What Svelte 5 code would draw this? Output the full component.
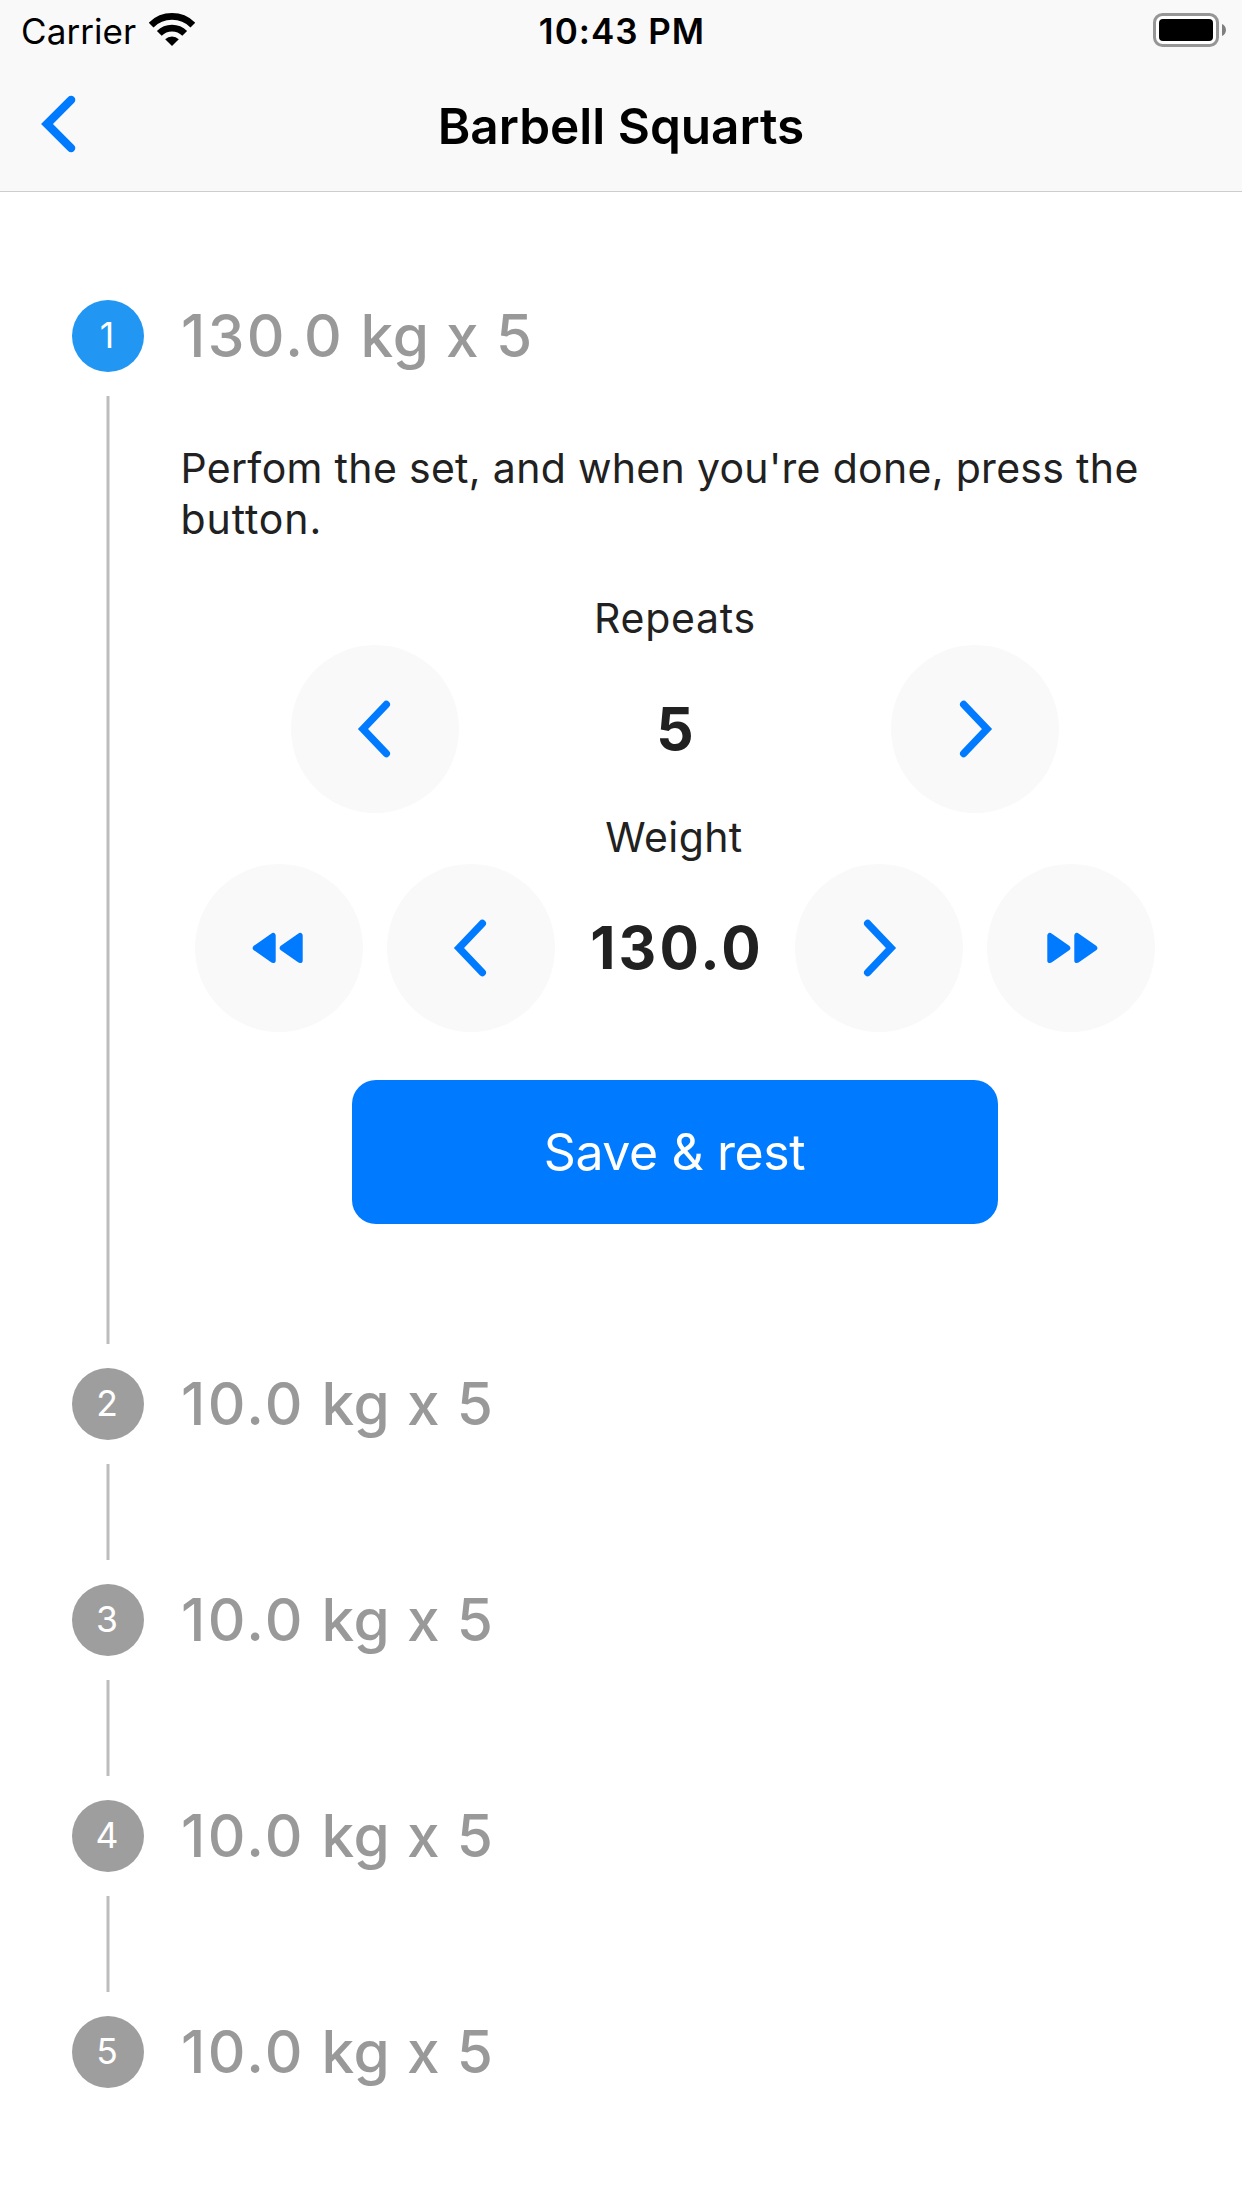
<script>
  let repeats = $state(5);
  let weight = $state(130);

  const sets = [
    { weight: 130, repeats: 5 },
    { weight: 10, repeats: 5 },
    { weight: 10, repeats: 5 },
    { weight: 10, repeats: 5 },
    { weight: 10, repeats: 5 }
  ];
  const active = 0;
</script>

{#snippet chevron()}
  <svg class="glyph" viewBox="-84 -84 168 168" aria-hidden="true">
    <path class="chevron" d="M11.3 -24.5 L-12 0 L11.3 24.5" />
  </svg>
{/snippet}

{#snippet double()}
  <svg class="glyph" viewBox="-84 -84 168 168" aria-hidden="true">
    <path class="solid" d="M-23.6 0 L-6 -12.4 V12.4 Z M3.4 0 L21 -12.4 V12.4 Z" />
  </svg>
{/snippet}

<div class="screen">
  <header>
    <div class="status">
      <div class="carrier">
        <span>Carrier</span>
        <svg class="wifi" width="46" height="62" viewBox="0 0 46 62" aria-hidden="true">
          <path class="wave" d="M2.1 25.1 A29.6 29.6 0 0 1 43.9 25.1" />
          <path class="wave" d="M10.3 33.3 A18 18 0 0 1 35.7 33.3" />
          <path d="M23 46 L16.2 39.2 A9.8 9.8 0 0 1 29.8 39.2 Z" />
        </svg>
      </div>
      <div class="time">10:43 PM</div>
      <svg class="battery" width="74" height="62" viewBox="0 0 74 62" aria-hidden="true">
        <rect class="shell" x="1.5" y="14.5" width="63" height="31" rx="8" />
        <rect x="6" y="19" width="54" height="22" rx="4" />
        <path class="nub" d="M69 24 C74.3 26 74.3 34 69 36 Z" />
      </svg>
    </div>
    <nav>
      <button class="back" aria-label="Back">
        <svg width="40" height="64" viewBox="0 0 40 64" aria-hidden="true">
          <path class="chevron bold" d="M32.1 7.9 L8 32 L32.1 56.1" />
        </svg>
      </button>
      <h1>Barbell Squarts</h1>
    </nav>
  </header>

  <main>
    {#each sets as set, i}
      <section class="step">
        <div class="rail">
          <div class="badge" class:active={i === active}>{i + 1}</div>
          {#if i < sets.length - 1}<div class="line"></div>{/if}
        </div>
        <div class="content">
          <h2><span class="amount">{set.weight.toFixed(1)}</span> kg x {set.repeats}</h2>
          {#if i === active}
            <div class="body">
              <p>Perfom the set, and when you're done, press the <span class="last">button.</span></p>
              <div class="label repeats">Repeats</div>
              <div class="controls">
                <button class="round" aria-label="Fewer repeats" onclick={() => (repeats -= 1)}>{@render chevron()}</button>
                <div class="value wide">{repeats}</div>
                <button class="round forward" aria-label="More repeats" onclick={() => (repeats += 1)}>{@render chevron()}</button>
              </div>
              <div class="label weight">Weight</div>
              <div class="controls">
                <button class="round" aria-label="Much less weight" onclick={() => (weight -= 10)}>{@render double()}</button>
                <button class="round" aria-label="Less weight" onclick={() => (weight -= 2.5)}>{@render chevron()}</button>
                <div class="value decimal">{weight.toFixed(1)}</div>
                <button class="round forward" aria-label="More weight" onclick={() => (weight += 2.5)}>{@render chevron()}</button>
                <button class="round forward" aria-label="Much more weight" onclick={() => (weight += 10)}>{@render double()}</button>
              </div>
              <button class="save">Save &amp; rest</button>
            </div>
          {/if}
        </div>
      </section>
    {/each}
  </main>
</div>

<style>
  :global(body) {
    margin: 0;
    background: #fff;
  }
  .screen {
    box-sizing: border-box;
    width: 1242px;
    height: 2208px;
    overflow: hidden;
    background: #fff;
    color: #212121;
    font-family: Inter, "Liberation Sans", sans-serif;
  }
  button {
    padding: 0;
    border: 0;
    background: none;
    font: inherit;
  }
  svg {
    display: block;
  }
  h1, h2, p {
    margin: 0;
  }

  header {
    background: #f9f9f9;
    border-bottom: 1px solid #cdcdcd;
    color: #000;
  }
  .status {
    display: grid;
    grid-template-columns: 1fr auto 1fr;
    height: 62px;
    line-height: 62px;
    font-size: 35px;
  }
  .carrier {
    display: flex;
    gap: 13px;
    padding-left: 21px;
    letter-spacing: 0.08px;
  }
  .wave {
    fill: none;
    stroke: #000;
    stroke-width: 6.8;
  }
  .time {
    padding-left: 2px;
    font-weight: 600;
    letter-spacing: 1px;
  }
  .battery {
    justify-self: end;
    margin-right: 15px;
  }
  .shell {
    fill: #fff;
    stroke: #969696;
    stroke-width: 3;
  }
  .nub {
    fill: #7f7f7f;
  }
  nav {
    display: grid;
    grid-template-columns: 120px 1fr 120px;
    align-items: center;
    height: 129px;
  }
  .back {
    padding: 0 0 5px 39px;
  }
  h1 {
    padding-bottom: 2px;
    text-align: center;
    font-size: 49.5px;
    font-weight: 600;
    line-height: 60px;
  }
  .chevron {
    fill: none;
    stroke: #007aff;
    stroke-width: 7.4;
    stroke-linecap: round;
  }
  .chevron.bold {
    stroke-width: 8.4;
  }

  main {
    padding: 108px 72px 0;
  }
  .step {
    display: grid;
    grid-template-columns: 72px 1fr;
    column-gap: 36px;
    min-height: 216px;
  }
  .rail {
    display: flex;
    flex-direction: column;
    align-items: center;
  }
  .badge {
    box-sizing: border-box;
    width: 72px;
    height: 72px;
    padding-right: 2px;
    border-radius: 50%;
    background: #9e9e9e;
    color: #fff;
    font-size: 35.5px;
    line-height: 72px;
    text-align: center;
  }
  .badge.active {
    background: #2196f3;
  }
  .line {
    flex: 1;
    width: 4px;
    margin: 24px 0;
    background: linear-gradient(90deg, #dedede 1px, #bdbdbd 1px 3px, #dedede 3px);
  }
  h2 {
    padding-left: 1px;
    color: #999;
    font-size: 58.5px;
    font-weight: 500;
    line-height: 72px;
    letter-spacing: 0.8px;
  }
  .amount {
    letter-spacing: 2.4px;
  }
  .body {
    display: flex;
    flex-direction: column;
    align-items: center;
    padding: 71px 0 144px;
    font-size: 41px;
  }
  p {
    align-self: stretch;
    padding-left: 0.5px;
    line-height: 51px;
    letter-spacing: 0.31px;
  }
  .last {
    letter-spacing: 0.9px;
  }
  .label {
    padding-bottom: 3px;
    line-height: 48px;
  }
  .repeats {
    margin-top: 49px;
    letter-spacing: 0.75px;
  }
  .weight {
    padding-right: 2px;
    letter-spacing: 0.4px;
  }
  .controls {
    display: flex;
    gap: 24px;
  }
  .round {
    width: 168px;
    height: 168px;
    border-radius: 50%;
    background: #f9f9f9;
  }
  .glyph {
    width: 168px;
    height: 168px;
  }
  .forward .glyph {
    transform: scaleX(-1);
  }
  .solid {
    fill: #007aff;
    stroke: #007aff;
    stroke-width: 5.4;
    stroke-linejoin: round;
  }
  .value {
    box-sizing: border-box;
    width: 192px;
    line-height: 168px;
    text-align: center;
    font-size: 58.5px;
    font-weight: 700;
  }
  .value.wide {
    width: 384px;
  }
  .value.decimal {
    padding-left: 4px;
    letter-spacing: 3.1px;
  }
  .save {
    box-sizing: border-box;
    width: 646px;
    height: 144px;
    margin-top: 48px;
    padding-right: 1px;
    border-radius: 24px;
    background: #007aff;
    color: #fff;
    font-size: 50px;
    letter-spacing: -0.4px;
  }
</style>
